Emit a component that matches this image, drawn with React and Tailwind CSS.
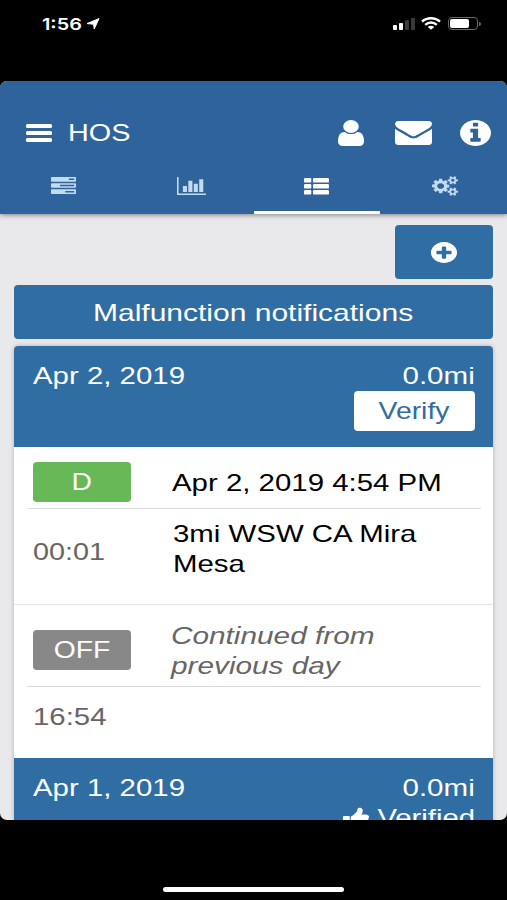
import React from 'react';
import clsx from 'clsx';

const CIRCLE = 'm0 0q0 209-103 385.5t-279.5 279.5-385.5 103-385.5-103-279.5-279.5-103-385.5 103-385.5 279.5-279.5 385.5-103 385.5 103 279.5 279.5 103 385.5z';
const SMALL_COG = 'v140q0 16-149 31-12 27-30 52 51 113 51 138 0 4-4 7-122 71-124 71-8 0-46-47t-52-68q-20 2-30 2t-30-2q-14 21-52 68t-46 47q-2 0-124-71-4-3-4-7 0-25 51-138-18-25-30-52-149-15-149-31v-140q0-16 149-31 13-29 30-52-51-113-51-138 0-4 4-7 4-2 35-20t59-34 30-16q8 0 46 46.5t52 67.5q20-2 30-2t30 2q51-71 92-112l6-2q4 0 124 70 4 3 4 7 0 25-51 138 17 23 30 52 149 15 149 31z';

const ICONS = {
    user: {
        box: '256 128 1280 1536',
        d: 'M1536 1399q0 109-62.5 187t-150.5 78h-854q-88 0-150.5-78t-62.5-187q0-85 8.5-160.5t31.5-152 58.5-131 94-89 134.5-34.5q131 128 313 128t313-128q76 0 134.5 34.5t94 89 58.5 131 31.5 152 8.5 160.5zm-256-887q0 159-112.5 271.5t-271.5 112.5-271.5-112.5-112.5-271.5 112.5-271.5 271.5-112.5 271.5 112.5 112.5 271.5z',
    },
    envelope: {
        box: '0 256 1792 1408',
        d: 'M1792 710v794q0 66-47 113t-113 47h-1472q-66 0-113-47t-47-113v-794q44 49 101 87 362 246 497 345 57 42 92.5 65.5t94.5 48 110 24.5h2q51 0 110-24.5t94.5-48 92.5-65.5q170-123 498-345 57-39 100-87zm0-294q0 79-49 151t-122 123q-376 261-468 325-10 7-42.5 31t-54 38.5-52 32.5-57.5 27-50 9h-2q-23 0-50-9t-57.5-27-52-32.5-54-38.5-42.5-31q-91-64-262-182.5t-205-142.5q-62-42-117-115.5t-55-136.5q0-78 41.5-130t118.5-52h1472q65 0 112.5 47t47.5 113z',
    },
    info: {
        box: '128 128 1536 1536',
        d: 'M1152 1376v-160q0-14-9-23t-23-9h-96v-512q0-14-9-23t-23-9h-320q-14 0-23 9t-9 23v160q0 14 9 23t23 9h96v320h-96q-14 0-23 9t-9 23v160q0 14 9 23t23 9h448q14 0 23-9t9-23zm-128-896v-160q0-14-9-23t-23-9h-192q-14 0-23 9t-9 23v160q0 14 9 23t23 9h192q14 0 23-9t9-23zM1664 896' + CIRCLE,
    },
    plus: {
        box: '128 128 1536 1536',
        d: 'M1344 960v-128q0-26-19-45t-45-19h-256v-256q0-26-19-45t-45-19h-128q-26 0-45 19t-19 45v256h-256q-26 0-45 19t-19 45v128q0 26 19 45t45 19h256v256q0 26 19 45t45 19h128q26 0 45-19t19-45v-256h256q26 0 45-19t19-45zM1664 896' + CIRCLE,
    },
    tasks: {
        box: '0 128 1792 1408',
        d: 'M1024 1408h640v-128h-640v128zm-384-512h1024v-128h-1024v128zm640-512h384v-128h-384v128zm512 832v256q0 26-19 45t-45 19h-1664q-26 0-45-19t-19-45v-256q0-26 19-45t45-19h1664q26 0 45 19t19 45zm0-512v256q0 26-19 45t-45 19h-1664q-26 0-45-19t-19-45v-256q0-26 19-45t45-19h1664q26 0 45 19t19 45zm0-512v256q0 26-19 45t-45 19h-1664q-26 0-45-19t-19-45v-256q0-26 19-45t45-19h1664q26 0 45 19t19 45z',
    },
    chart: {
        box: '0 128 2048 1536',
        d: 'M704 896v512h-288v-512h288zm384-448v960h-288v-960h288zm960 1088v128h-2048v-1536h112v1408h1936zm-576-832v704h-288v-704h288zm384-384v1088h-288v-1088h288z',
    },
    cogs: {
        box: '0 0 1920 1792',
        d: 'M896 896q0-106-75-181t-181-75-181 75-75 181 75 181 181 75 181-75 75-181zm768 512q0-52-38-90t-90-38-90 38-38 90q0 53 37.5 90.5t90.5 37.5 90.5-37.5 37.5-90.5zm0-1024q0-52-38-90t-90-38-90 38-38 90q0 53 37.5 90.5t90.5 37.5 90.5-37.5 37.5-90.5zm-384 421v185q0 10-7 19.5t-16 10.5l-155 24q-11 35-32 76 34 48 90 115 7 11 7 20 0 12-7 19-23 30-82.5 89.5t-78.5 59.5q-11 0-21-7l-115-90q-37 19-77 31-11 108-23 155-7 24-30 24h-186q-11 0-20-7.5t-10-17.5l-23-153q-34-10-75-31l-118 89q-7 7-20 7-11 0-21-8-144-133-144-160 0-9 7-19 10-14 41-53t47-61q-23-44-35-82l-152-24q-10-1-17-9.5t-7-19.5v-185q0-10 7-19.5t16-10.5l155-24q11-35 32-76-34-48-90-115-7-11-7-20 0-12 7-20 22-30 82-89t79-59q11 0 21 7l115 90q34-18 77-32 11-108 23-154 7-24 30-24h186q11 0 20 7.5t10 17.5l23 153q34 10 75 31l118-89q8-7 20-7 11 0 21 8 144 133 144 160 0 8-7 19-12 16-42 54t-45 60q23 48 34 82l152 23q10 2 17 10.5t7 19.5zM1920 1338' + SMALL_COG + 'M1920 314' + SMALL_COG,
    },
    thumb: {
        box: '64 0 1600 1600',
        d: 'M320 1344q0-26-19-45t-45-19q-27 0-45.5 19t-18.5 45q0 27 18.5 45.5t45.5 18.5q26 0 45-18.5t19-45.5zm160-512v640q0 26-19 45t-45 19h-288q-26 0-45-19t-19-45v-640q0-26 19-45t45-19h288q26 0 45 19t19 45zm1184 0q0 86-55 149 15 44 15 76 3 76-43 137 17 56 0 117-15 57-54 94 9 112-49 181-64 76-197 78h-129q-66 0-144-15.5t-121.5-29-120.5-39.5q-123-43-158-44-26-1-45-19.5t-19-44.5v-641q0-25 18-43.5t43-20.5q24-2 76-59t101-121q68-87 101-120 18-18 31-48t17.5-48.5 13.5-60.5q7-39 12.5-61t19.5-52 34-50q19-19 45-19 46 0 82.5 10.5t60 26 40 40.5 24 45 12 50 5 45 .5 39q0 38-9.5 76t-19 60-27.5 56q-3 6-10 18t-11 22-8 24h277q78 0 135 57t57 135z',
    },
};

const Icon = ({ name, className }) => (
    <svg viewBox={ICONS[name].box} preserveAspectRatio="none" fill="currentColor" className={clsx('block shrink-0', className)}>
        <path d={ICONS[name].d} />
    </svg>
);

// Wide lettering: every label is stretched horizontally
const Wide = ({ children, className = 'origin-left scale-x-[1.225]' }) => (
    <span className={clsx('inline-block whitespace-nowrap', className)}>{children}</span>
);

const StatusBar = () => (
    <div className="h-[81px] shrink-0 flex items-start justify-between pl-[42px] pr-[26px] pt-[15px] text-white">
        <div className="flex items-center">
            <span className="w-[41px] text-[16.5px] leading-[18px] font-semibold font-['Inter',sans-serif]">
                <span className="inline-block origin-left scale-x-[1.2]">1:56</span>
            </span>
            <svg viewBox="0 0 14 12" className="ml-[3px] w-[14px] h-3" fill="currentColor" stroke="currentColor" strokeWidth="1" strokeLinejoin="round">
                <path d="M13 .6 8.2 11 7.6 6.2 1 5.6Z" />
            </svg>
        </div>
        <div className="flex items-center pt-[2px]">
            <div className="flex items-end gap-[2px] h-3">
                <span className="w-1 h-[5px] rounded-[1px] bg-white" />
                <span className="w-1 h-[7px] rounded-[1px] bg-white" />
                <span className="w-1 h-[10px] rounded-[1px] bg-[#3a3a3a]" />
                <span className="w-1 h-3 rounded-[1px] bg-[#3a3a3a]" />
            </div>
            <svg viewBox="0 0 20 13" className="ml-[6px] w-5 h-[13px]" fill="none" stroke="currentColor" strokeWidth="2.4">
                <path d="M1 4.6C6 .1 14 .1 19 4.6M4.2 7.8c3.4-3 8.2-3 11.600 0" />
                <path d="M6.8 9.9c1.900-1.500 4.500-1.500 6.400 0L10 12.800Z" fill="currentColor" stroke="none" />
            </svg>
            <div className="ml-[7px] w-[30px] h-[13px] rounded-[4px] border border-[#6a6a6a] p-[1px]">
                <div className="w-[19px] h-full rounded-[2px] bg-white" />
            </div>
            <span className="ml-px w-[2px] h-1 rounded-r bg-[#6a6a6a]" />
        </div>
    </div>
);

const Tab = ({ active, children }) => (
    <button
        className={clsx(
            'flex-1 h-[54px] flex justify-center border-b-[3px] pt-[17px]',
            active ? 'border-white text-white' : 'border-transparent text-[#c3dbf0]'
        )}
    >
        {children}
    </button>
);

const Header = () => (
    <header className="relative h-[133px] shrink-0 bg-[#2f639b] text-white shadow-[0_1px_5px_rgba(0,0,0,0.45)]">
        <div className="h-[79px] flex items-center pt-6 pl-[26px] pr-4">
            <button className="w-[26px] h-[18px] flex flex-col justify-between">
                <span className="w-full h-1 rounded-[1.5px] bg-white" />
                <span className="w-full h-1 rounded-[1.5px] bg-white" />
                <span className="w-full h-1 rounded-[1.5px] bg-white" />
            </button>
            <h1 className="ml-4"><Wide className="origin-left scale-x-[1.2]">HOS</Wide></h1>
            <div className="ml-auto flex items-center">
                <Icon name="user" className="w-[26px] h-[26px]" />
                <Icon name="envelope" className="ml-[31px] mt-px w-[37px] h-6" />
                <Icon name="info" className="ml-[28px] w-[31px] h-[26px]" />
            </div>
        </div>
        <nav className="flex">
            <Tab><Icon name="tasks" className="ml-px w-[25px] h-[17px]" /></Tab>
            <Tab><Icon name="chart" className="ml-[3px] w-[29px] h-[18px]" /></Tab>
            <Tab active>
                <svg viewBox="0 0 25 17" className="mt-px w-[25px] h-[17px]" fill="currentColor">
                    {[0, 6, 12].map((y) => (
                        <React.Fragment key={y}>
                            <rect x="0" y={y} width="7.3" height="4.6" rx="1.2" />
                            <rect x="9" y={y} width="16" height="4.6" rx="1.2" />
                        </React.Fragment>
                    ))}
                </svg>
            </Tab>
            <Tab><Icon name="cogs" className="ml-[2px] -mt-px w-[26px] h-5" /></Tab>
        </nav>
    </header>
);

const DayHeader = ({ date, distance, children }) => (
    <div className="h-[101px] shrink-0 flex justify-between bg-[#306da3] text-white pt-[15px] pl-[19px] pr-[18px]">
        <div><Wide>{date}</Wide></div>
        <div className="flex flex-col items-end">
            <Wide className="origin-right scale-x-[1.23]">{distance}</Wide>
            {children}
        </div>
    </div>
);

const Badge = ({ color, children }) => (
    <div className={clsx('w-[98px] h-10 rounded-[4px] flex items-center justify-center text-white', color)}>
        <Wide className="origin-center scale-x-[1.18]">{children}</Wide>
    </div>
);

const App = () => {
    return (
        <div className="w-[507px] h-[900px] overflow-hidden bg-black flex flex-col text-[24px] leading-[30px] font-['Liberation_Sans',Arial,sans-serif]">
            <StatusBar />
            <div className="h-[739px] shrink-0 overflow-hidden rounded-[7px] bg-[#e9e9eb] flex flex-col">
                <Header />
                <main className="px-[14px] pt-[11px]">
                    <button className="ml-auto w-[98px] h-[54px] rounded-[4px] bg-[#306da3] text-white flex items-center justify-center">
                        <Icon name="plus" className="w-[26px] h-[21px]" />
                    </button>
                    <button className="mt-[6px] w-full h-[54px] rounded-[4px] bg-[#306da3] text-white pt-px">
                        <Wide className="origin-center scale-x-[1.25]">Malfunction notifications</Wide>
                    </button>

                    <section className="mt-[7px] rounded-t-[4px] overflow-hidden bg-white shadow-[0_0_4px_rgba(0,0,0,0.25)]">
                        <DayHeader date="Apr 2, 2019" distance="0.0mi">
                            <button className="w-[121px] h-10 rounded-[4px] bg-white text-[#306da3]">
                                <Wide className="origin-center scale-x-[1.18]">Verify</Wide>
                            </button>
                        </DayHeader>

                        <div className="h-[158px] border-b border-[#e6e6e8]">
                            <div className="h-[62px] ml-[14px] mr-[12px] pl-[5px] pt-[15px] flex border-b border-[#dcdcde]">
                                <Badge color="bg-[#67b856]">D</Badge>
                                <p className="ml-[41px] pt-[6px] text-black"><Wide>Apr 2, 2019 4:54 PM</Wide></p>
                            </div>
                            <div className="flex pl-[19px] pt-[10px]">
                                <p className="w-[140px] pt-[18px] text-[#666]"><Wide className="origin-left scale-x-[1.2]">00:01</Wide></p>
                                <p className="text-black"><Wide>3mi WSW CA Mira<br />Mesa</Wide></p>
                            </div>
                        </div>

                        <div className="h-[153px]">
                            <div className="h-[82px] ml-[13px] mr-[12px] pl-[6px] flex border-b border-[#dcdcde]">
                                <div className="pt-[25px]"><Badge color="bg-[#888]">OFF</Badge></div>
                                <p className="ml-[40px] pt-[16px] italic text-[#666]">
                                    <Wide className="origin-left scale-x-[1.24]">Continued from<br />previous day</Wide>
                                </p>
                            </div>
                            <p className="pl-[19px] pt-[15px] text-[#666]"><Wide>16:54</Wide></p>
                        </div>

                        <DayHeader date="Apr 1, 2019" distance="0.0mi">
                            <div className="flex">
                                <Icon name="thumb" className="mt-[3px] mr-[26px] w-[26px] h-[21px]" />
                                <Wide className="origin-right scale-x-[1.22]">Verified</Wide>
                            </div>
                        </DayHeader>
                    </section>
                </main>
            </div>
            <div className="flex-1 flex justify-center items-end pb-[8px]">
                <div className="w-[181px] h-[5px] rounded-full bg-white" />
            </div>
        </div>
    );
};

export default App;
